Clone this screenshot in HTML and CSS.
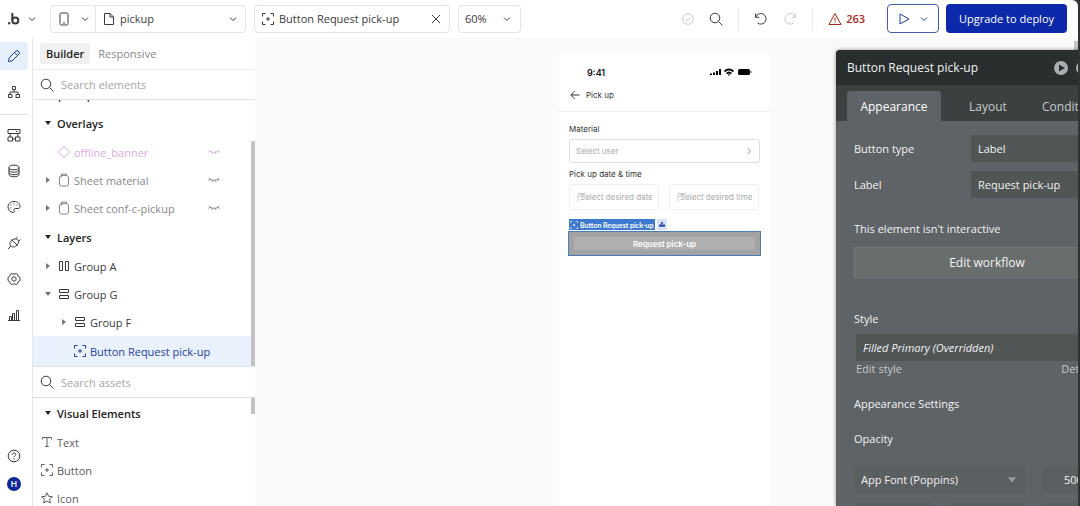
FILE: index.html
```html
<!DOCTYPE html>
<html lang="en">
<head>
    <meta charset="utf-8">
    <meta name="viewport" content="width=device-width, initial-scale=1.0">
    <title>pickup | Editor</title>
    <link rel="stylesheet" href="styles.css">
</head>
<body>
    <svg class="sprite">
        <symbol id="chevron" viewBox="0 0 8 8"><path d="M1 2.5l3 3 3-3"/></symbol>
        <symbol id="search" viewBox="0 0 14 14"><circle cx="6" cy="6" r="4.8"/><path d="M9.5 9.5l3.8 3.8"/></symbol>
        <symbol id="element" viewBox="0 0 12 12"><path d="M.5 3.5v-3h3M8.5.5h3v3M11.5 8.5v3h-3M3.5 11.5h-3v-3M6 4v4M4 6h4"/></symbol>
        <symbol id="rows" viewBox="0 0 12 12"><path d="M1.5 1.5h9v3h-9zM1.5 7.5h9v3h-9z"/></symbol>
        <symbol id="columns" viewBox="0 0 12 12"><path d="M1.5 1.5h3v9h-3zM7.5 1.5h3v9h-3z"/></symbol>
        <symbol id="sheet" viewBox="0 0 12 14"><path d="M4 2.5h4a2.500 2.500 0 0 1 2.500 2.500v6a2 2 0 0 1-2 2h-5a2 2 0 0 1-2-2V5A2.500 2.500 0 0 1 4 2.500zM3.500 4.500V1h5v1.500"/></symbol>
        <symbol id="hidden" viewBox="0 0 12 6"><path d="M.5 1c3 3 8 3 11 0M2 2L.8 3.800M4.500 3.200L4 5M7.500 3.200L8 5M10 2l1.200 1.800"/></symbol>
        <symbol id="right" viewBox="0 0 6 6"><path d="M1 0l4 3-4 3z"/></symbol>
        <symbol id="down" viewBox="0 0 6 6"><path d="M0 1h6L3 5z"/></symbol>
    </svg>

    <div class="app">
        <header class="topbar">
            <button class="logo" aria-label="Home">
                <svg class="icon logo-mark" viewBox="0 0 12 12"><circle cx="1.200" cy="10.200" r="1.200" class="dot"/><path d="M4.300 0v7.500"/><circle cx="7.300" cy="7.500" r="3"/></svg>
                <svg class="icon s8"><use href="#chevron"/></svg>
            </button>
            <div class="box page-box">
                <button class="device" aria-label="Device">
                    <svg class="icon s14" viewBox="0 0 14 14"><rect x="3" y="1" width="8" height="12" rx="1.500"/><path d="M6 11h2"/></svg>
                    <svg class="icon s8"><use href="#chevron"/></svg>
                </button>
                <button class="page">
                    <svg class="icon s12" viewBox="0 0 12 12"><path d="M1.500.5h5.500l3.500 3.500v7.500h-9zM7 .5V4h3.500"/></svg>
                    <span>pickup</span>
                    <svg class="icon s8 end"><use href="#chevron"/></svg>
                </button>
            </div>
            <div class="box element-box">
                <svg class="icon s12"><use href="#element"/></svg>
                <span>Button Request pick-up</span>
                <button class="end" aria-label="Close"><svg class="icon s10" viewBox="0 0 10 10"><path d="M1 1l8 8M9 1L1 9"/></svg></button>
            </div>
            <button class="box zoom">60% <svg class="icon s8"><use href="#chevron"/></svg></button>

            <div class="tools">
                <svg class="icon s12 faded" viewBox="0 0 12 12"><circle cx="6" cy="6" r="5.300"/><path d="M3.500 6.200l1.800 1.800 3.400-3.600"/></svg>
                <button aria-label="Search"><svg class="icon s14"><use href="#search"/></svg></button>
                <span class="sep"></span>
                <button aria-label="Undo"><svg class="icon s14" viewBox="0 0 14 14"><path d="M1.500 1.500v3.800h3.800M1.800 5A5.300 5.300 0 1 1 3.500 11"/></svg></button>
                <button class="faded" aria-label="Redo"><svg class="icon s14" viewBox="0 0 14 14"><path d="M12.500 1.500v3.800H8.700M12.200 5A5.300 5.300 0 1 0 10.500 11"/></svg></button>
                <span class="sep"></span>
                <button class="issues"><svg class="icon s14" viewBox="0 0 14 14"><path d="M7 1.500l6 11H1zM7 5.500v3.500M7 10v1"/></svg> 263</button>
                <button class="preview" aria-label="Preview">
                    <svg class="icon s12" viewBox="0 0 12 12"><path d="M2 1l9 5-9 5z"/></svg>
                    <svg class="icon s8"><use href="#chevron"/></svg>
                </button>
                <button class="deploy">Upgrade to deploy</button>
            </div>
        </header>

        <div class="main">
            <nav class="rail">
                <button class="active" aria-label="Design"><svg class="icon s14" viewBox="0 0 14 14"><path d="M1.500 12.500l.7-3.700L9 2q1-1 2 0l1 1q1 1 0 2l-6.800 6.800zM7.500 3.500l3 3"/></svg></button>
                <button aria-label="Workflow"><svg class="icon s14" viewBox="0 0 14 14"><path d="M5.500 1.500h3v3h-3zM1.500 9.500h3.500v3H1.500zM9 9.500h3.500v3H9zM7 4.500V7M3 9.500V7h8v2.500"/></svg></button>
                <hr>
                <button aria-label="Views"><svg class="icon s14" viewBox="0 0 14 14"><path d="M1 1.500h12v4H1zM1 9h4.500v4H1zM8.500 9H13v4H8.500zM5.500 11h3M3.200 9V5.500M10.800 9V5.500M9 3.500h1.500"/></svg></button>
                <button aria-label="Data"><svg class="icon s14" viewBox="0 0 14 14"><ellipse cx="7" cy="3.500" rx="5" ry="2.300"/><path d="M2 3.500v7c0 3 10 3 10 0v-7M2 6c0 3 10 3 10 0M2 8.500c0 3 10 3 10 0"/></svg></button>
                <button aria-label="Styles"><svg class="icon s14" viewBox="0 0 14 14"><path d="M7 1.500c-3.500 0-6 2.500-6 5.500s2.500 5.500 5 5.500c1.500 0 1.500-1 1-2-.5-1 .2-2 1.500-2H11c1.500 0 2-1 2-2 0-3-2.500-5-6-5z"/><path d="M3.500 7.500v1M4 4.500v1M7 3.500v1M10 4.500v1"/></svg></button>
                <button aria-label="Plugins"><svg class="icon s14" viewBox="0 0 14 14"><path d="M4.500 3.500l6 6M10 9c2-2 2-4 .8-5.200S7.500 2.500 5 4M4.800 4.200C2.500 6.500 2.500 8.500 4 10s3.500 1.500 6-.8M4 10l-3 3M8.500 2.800L10.500.8M11.400 5.500l2-2"/></svg></button>
                <button aria-label="Settings"><svg class="icon s14" viewBox="0 0 14 14"><path d="M4.500 1.500L6 2h2l1.500-.5 1 .7.500 1.800 2 1.500v3L11 10l-.5 1.800-1 .7L8 12H6l-1.500.5-1-.7L3 10 1 8.500v-3L3 4l.5-1.800z"/><circle cx="7" cy="7" r="2.200"/></svg></button>
                <button aria-label="Logs"><svg class="icon s14" viewBox="0 0 14 14"><path d="M1 12.500h12M2.500 12.500v-4h2v4M5.500 12.500v-7h2v7M9.500 12.500v-10h2v10"/></svg></button>
                <button class="help" aria-label="Help"><svg class="icon s14" viewBox="0 0 14 14"><circle cx="7" cy="7" r="5.800"/><path d="M5.200 5.500c.2-2.200 3.700-2 3.600 0C8.700 6.800 7 6.800 7 8.300M7 9.500v1"/></svg></button>
                <button class="account"><span>H</span></button>
            </nav>

            <aside class="panel">
                <div class="panel-tabs">
                    <button class="active">Builder</button>
                    <button>Responsive</button>
                </div>
                <label class="search">
                    <svg class="icon s14"><use href="#search"/></svg>
                    <input type="text" placeholder="Search elements" aria-label="Search elements">
                </label>
                <div class="tree">
                    <div class="row clipped"><svg class="icon s12"><use href="#rows"/></svg> pickup</div>
                    <div class="row heading"><svg class="arrow"><use href="#down"/></svg> Overlays</div>
                    <div class="row muted reusable">
                        <span class="arrow"></span>
                        <svg class="icon s12" viewBox="0 0 12 12"><path d="M6 .5L11.500 6 6 11.500.5 6z"/></svg> offline_banner
                        <svg class="icon eye"><use href="#hidden"/></svg>
                    </div>
                    <div class="row muted">
                        <svg class="arrow"><use href="#right"/></svg>
                        <svg class="icon sheet"><use href="#sheet"/></svg> Sheet material
                        <svg class="icon eye"><use href="#hidden"/></svg>
                    </div>
                    <div class="row muted">
                        <svg class="arrow"><use href="#right"/></svg>
                        <svg class="icon sheet"><use href="#sheet"/></svg> Sheet conf-c-pickup
                        <svg class="icon eye"><use href="#hidden"/></svg>
                    </div>
                    <div class="row heading"><svg class="arrow"><use href="#down"/></svg> Layers</div>
                    <div class="row"><svg class="arrow"><use href="#right"/></svg><svg class="icon s12"><use href="#columns"/></svg> Group A</div>
                    <div class="row"><svg class="arrow"><use href="#down"/></svg><svg class="icon s12"><use href="#rows"/></svg> Group G</div>
                    <div class="row nested"><svg class="arrow"><use href="#right"/></svg><svg class="icon s12"><use href="#rows"/></svg> Group F</div>
                    <div class="row nested selected"><span class="arrow"></span><svg class="icon s12"><use href="#element"/></svg> Button Request pick-up</div>
                    <span class="thumb tree-thumb"></span>
                </div>
                <label class="search assets-search">
                    <svg class="icon s14"><use href="#search"/></svg>
                    <input type="text" placeholder="Search assets" aria-label="Search assets">
                </label>
                <div class="assets">
                    <div class="row heading"><svg class="arrow"><use href="#down"/></svg> Visual Elements</div>
                    <div class="row asset"><svg class="icon s12" viewBox="0 0 12 12"><path d="M1.500 3.500V1.500h9v2M6 1.500v9M4.200 10.500h3.600"/></svg> Text</div>
                    <div class="row asset"><svg class="icon s12"><use href="#element"/></svg> Button</div>
                    <div class="row asset"><svg class="icon s12" viewBox="0 0 12 12"><path d="M6 .8l1.600 3.500 3.800.4-2.900 2.500.9 3.800L6 9.100 2.600 11l.9-3.800L.6 4.700l3.800-.4z"/></svg> Icon</div>
                    <span class="thumb assets-thumb"></span>
                </div>
            </aside>

            <main class="canvas">
                <div class="phone">
                    <div class="status">
                        <span>9:41</span>
                        <svg class="signals" viewBox="0 0 42 8"><path d="M0 7h2V5.500H0zM3 7h2V4.500H3zM6 7h2V3H6zM9 7h2V1H9z"/><path d="M14 3c3-3.200 7-3.200 10 0l-1.200 1.200c-2.200-2.400-5.400-2.400-7.600 0zM16 5c2-2 4-2 6 0l-1.200 1.200c-1-1-2.600-1-3.600 0zM18 6.800L19 8l1-1.200c-.5-.6-1.500-.6-2 0z"/><rect x="28" y="1" width="12" height="6" rx="1.500"/><path d="M40.500 3v2l1-.5v-1z"/></svg>
                    </div>
                    <div class="phone-nav">
                        <svg class="icon s10" viewBox="0 0 10 10"><path d="M9.500 5H1M4.500 1.200L.8 5l3.700 3.800"/></svg> Pick up
                    </div>
                    <form class="phone-form">
                        <label for="material">Material</label>
                        <div class="field">
                            <input id="material" type="text" placeholder="Select user">
                            <svg class="icon s8" viewBox="0 0 8 8"><path d="M2.500 1l3 3-3 3"/></svg>
                        </div>
                        <label for="date">Pick up date &amp; time</label>
                        <div class="pair">
                            <div class="field light">
                                <svg class="icon calendar" viewBox="0 0 10 10"><path d="M1 9.500V1.500h8M1 4h8M3 .5v2M7 .5v2"/></svg>
                                <input id="date" type="text" placeholder="Select desired date">
                            </div>
                            <div class="field light">
                                <svg class="icon calendar" viewBox="0 0 10 10"><path d="M1 9.500V1.500h8M1 4h8M3 .5v2M7 .5v2"/></svg>
                                <input type="text" placeholder="Select desired time" aria-label="Time">
                            </div>
                        </div>
                        <div class="selection">
                            <div class="tag">
                                <span class="tag-name"><svg class="icon s8"><use href="#element"/></svg> Button Request pick-up</span>
                                <span class="tag-parent"><svg viewBox="0 0 8 6"><path d="M2.500 0h3v2H4.500v1H8v3H0V3h3.500V2h-1z"/></svg></span>
                            </div>
                            <button type="button" class="request">Request pick-up</button>
                        </div>
                    </form>
                </div>
                <span class="thumb canvas-thumb"></span>

                <section class="props">
                    <div class="props-title">
                        <h2>Button Request pick-up</h2>
                        <button aria-label="Run"><svg viewBox="0 0 14 14"><circle cx="7" cy="7" r="7"/><path d="M5 3.500l6 3.500-6 3.500z"/></svg></button>
                        <button aria-label="Comment"><svg viewBox="0 0 14 14"><circle cx="7" cy="7" r="7"/></svg></button>
                    </div>
                    <div class="props-tabs">
                        <button class="active">Appearance</button>
                        <button>Layout</button>
                        <button>Conditional</button>
                    </div>
                    <div class="props-body">
                        <div class="prop">
                            <label for="type">Button type</label>
                            <select id="type"><option>Label</option></select>
                        </div>
                        <div class="prop">
                            <label for="label">Label</label>
                            <input id="label" type="text" value="Request pick-up">
                        </div>
                        <p class="notice">This element isn't interactive</p>
                        <button class="workflow">Edit workflow</button>
                        <label class="style-label" for="style">Style</label>
                        <select id="style" class="style-select"><option>Filled Primary (Overridden)</option></select>
                        <div class="style-links"><a href="#">Edit style</a><a href="#">Detach style</a></div>
                        <h3>Appearance Settings</h3>
                        <h3>Opacity</h3>
                        <div class="font-row">
                            <div class="font-family">
                                <select aria-label="Font"><option>App Font (Poppins)</option></select>
                                <svg class="caret"><use href="#down"/></svg>
                            </div>
                            <select class="weight" aria-label="Weight"><option>500</option></select>
                        </div>
                        <div class="format-row"><span></span><span></span><span></span></div>
                    </div>
                </section>
            </main>
        </div>
    </div>
</body>
</html>
```
FILE: styles.css
```css
* {
    box-sizing: border-box;
}

body {
    margin: 0;
    padding-right: 2px;
    background: #303334;
    font-family: "Open Sans", sans-serif;
    font-size: 11px;
    color: #3a3a3a;
}

button, input, select {
    margin: 0;
    padding: 0;
    border: none;
    border-radius: 0;
    background: none;
    font: inherit;
    color: inherit;
    appearance: none;
}

input, select {
    min-width: 0;
    outline: none;
}

button {
    display: flex;
    align-items: center;
    cursor: pointer;
}

/* icons */
.sprite {
    position: absolute;
    width: 0;
    height: 0;
}

.icon {
    flex: none;
    fill: none;
    stroke: currentColor;
    stroke-width: 1;
}

.s8 { width: 8px; height: 8px; }
.s10 { width: 10px; height: 10px; }
.s12 { width: 12px; height: 12px; }
.s14 { width: 14px; height: 14px; }

.end {
    margin-left: auto;
}

.faded {
    color: #c8c8c8;
}

.app {
    display: flex;
    flex-direction: column;
    height: 100vh;
    overflow: hidden;
    background: #fff;
    border-top-right-radius: 6px;
}

/* top bar */
.topbar {
    display: flex;
    align-items: center;
    flex: none;
    height: 37px;
    padding-right: 11px;
}

.logo {
    gap: 8px;
    width: 50px;
    padding-left: 8px;
}

.logo-mark {
    width: 12px;
    height: 12px;
    stroke-width: 2;
}

.dot {
    fill: currentColor;
    stroke: none;
}

.box {
    display: flex;
    align-items: center;
    height: 28px;
    margin-right: 8px;
    border: 1px solid #e4e4e4;
    border-radius: 4px;
}

.page-box, .element-box {
    width: 196px;
}

.device {
    gap: 10px;
    width: 45px;
    height: 26px;
    padding-left: 6px;
    border-right: 1px solid #e4e4e4;
}

.page {
    flex: 1;
    gap: 5px;
    padding: 0 8px 0 7px;
}

.element-box {
    gap: 5px;
    padding: 0 8px 0 7px;
}

.zoom {
    justify-content: space-between;
    width: 63px;
    padding: 0 9px 0 6px;
}

.tools {
    display: flex;
    align-items: center;
    gap: 15px;
    margin-left: auto;
}

.sep {
    width: 1px;
    height: 22px;
    background: #e8e8e8;
}

.issues {
    gap: 4px;
    padding-right: 7px;
    font-weight: 600;
    color: #a8281e;
}

.preview {
    gap: 10px;
    width: 52px;
    height: 29px;
    padding: 0 10px;
    border: 1px solid #3f5fae;
    border-radius: 4px;
    color: #1d3da8;
}

.deploy {
    justify-content: center;
    width: 121px;
    height: 29px;
    margin-left: -8px;
    border-radius: 4px;
    background: #0c29ab;
    color: #fff;
}

.main {
    display: flex;
    flex: 1;
    min-height: 0;
}

/* left rail */
.rail {
    display: flex;
    flex-direction: column;
    flex: none;
    width: 33px;
    padding: 5px 4px 8px 0;
    border-right: 1px solid #e6e6e6;
}

.rail button {
    justify-content: center;
    height: 28px;
    margin-bottom: 8px;
    border-radius: 0 4px 4px 0;
}

.rail .active {
    background: #e6effc;
    color: #1d3da8;
}

.rail hr {
    width: 100%;
    margin: 0 0 6px;
    border: none;
    border-top: 1px solid #e0e0e0;
}

.rail .help {
    margin: auto 0 0;
}

.rail .account {
    margin: 0;
}

.account span {
    width: 14px;
    border-radius: 50%;
    background: #10279c;
    font-size: 9px;
    font-weight: 600;
    line-height: 14px;
    color: #fff;
}

/* element tree */
.panel {
    display: flex;
    flex-direction: column;
    flex: none;
    width: 222px;
}

.panel-tabs {
    display: flex;
    align-items: center;
    flex: none;
    gap: 2px;
    height: 33px;
    padding-left: 7px;
    border-bottom: 1px solid #ececec;
    font-weight: 600;
}

.panel-tabs button {
    height: 21px;
    padding: 0 6px;
    border-radius: 3px;
    font-weight: 500;
    color: #888;
}

.panel-tabs .active {
    background: #f0f0f0;
    font-weight: 600;
    color: #222;
}

.search {
    display: flex;
    align-items: center;
    flex: none;
    gap: 7px;
    height: 30px;
    padding-left: 7px;
    border-bottom: 1px solid #dedede;
}

.search input {
    flex: 1;
}

.search input::placeholder {
    color: #a5a5a5;
}

.assets-search {
    height: 32px;
    border-top: 1px solid #e4e4e4;
}

.tree, .assets {
    position: relative;
    flex: none;
    overflow: hidden;
}

.assets {
    flex: 1;
}

.row {
    display: flex;
    align-items: center;
    gap: 4px;
    height: 28px;
    padding-left: 12px;
}

.row .arrow {
    width: 6px;
    height: 6px;
    margin-right: 3px;
    fill: #777;
}

.heading {
    height: 30px;
    font-weight: 600;
    color: #222;
}

.heading .arrow {
    margin-right: 2px;
    fill: #222;
}

.clipped {
    margin-top: -20px;
    padding-left: 9px;
    font-weight: 600;
}

.muted {
    color: #888;
}

.reusable {
    color: #d9addf;
}

.sheet {
    width: 12px;
    height: 14px;
}

.eye {
    width: 12px;
    height: 6px;
    margin: 0 35px 0 auto;
}

.nested {
    padding-left: 28px;
}

.selected {
    height: 30px;
    background: #e9f1fc;
    color: #1f3f9c;
}

.asset {
    padding-left: 8px;
    color: #5c5c5c;
}

.thumb {
    position: absolute;
    right: 0;
    width: 4px;
    background: #c4c4c4;
}

.tree-thumb {
    top: 41px;
    bottom: 0;
}

.assets-thumb {
    top: 0;
    height: 16px;
}

/* canvas */
.canvas {
    position: relative;
    flex: 1;
    min-width: 0;
    padding: 18px 4px 0 0;
    overflow: hidden;
    background: #fafafa;
}

.canvas-thumb {
    top: 4px;
    height: 20px;
}

.phone {
    width: 211px;
    height: 100%;
    margin: 0 auto;
    background: #fff;
    font-family: Inter, sans-serif;
    font-size: 8px;
    color: #333;
}

.status {
    display: flex;
    align-items: center;
    justify-content: space-between;
    height: 34px;
    padding: 0 18px 0 28px;
    font-size: 9px;
    font-weight: 600;
    color: #111;
}

.signals {
    width: 42px;
    height: 8px;
}

.phone-nav {
    display: flex;
    align-items: center;
    gap: 6px;
    padding: 0 0 10px 11px;
    border-bottom: 1px solid #eee;
    line-height: 12px;
}

.phone-form {
    padding: 11px 10px 0;
}

.phone-form label {
    display: block;
    line-height: 12px;
}

.field {
    display: flex;
    align-items: center;
    height: 24px;
    margin: 4px 0 5px;
    padding: 0 6px;
    border: 1px solid #ddd;
    border-radius: 3px;
    color: #999;
}

.field input {
    flex: 1;
}

.field input::placeholder {
    color: #aaa;
}

.pair {
    display: flex;
    gap: 10px;
    padding-right: 1px;
}

.light {
    position: relative;
    flex: 1;
    height: 26px;
    border-color: #eee;
}

.light input {
    width: 100%;
    padding-left: 4px;
}

.calendar {
    position: absolute;
    left: 7px;
    width: 10px;
    height: 10px;
    color: #ccc;
}

.selection {
    position: relative;
    margin-top: 17px;
    outline: 1px solid #4a7fb5;
}

.tag {
    position: absolute;
    bottom: 100%;
    left: 0;
    display: flex;
    gap: 2px;
    height: 11px;
    margin-bottom: 2px;
    font-family: Lato, sans-serif;
    font-size: 7px;
    font-weight: 700;
    white-space: nowrap;
}

.tag-name {
    display: flex;
    align-items: center;
    gap: 2px;
    padding: 0 2px 0 1px;
    background: #3c79d0;
    color: #fff;
}

.tag-parent {
    display: flex;
    align-items: center;
    justify-content: center;
    width: 10px;
    background: #d5e2f8;
    fill: #2a4c9c;
}

.tag-parent svg {
    width: 6px;
    height: 5px;
}

.request {
    justify-content: center;
    width: 100%;
    height: 23px;
    border: 5px solid #a2a2a2;
    background: #afafaf;
    font-weight: 600;
    color: #fff;
}

/* property editor, floats over the canvas and runs off its right edge */
.props {
    position: absolute;
    top: 13px;
    right: -60px;
    bottom: 0;
    width: 302px;
    overflow: hidden;
    border-top-left-radius: 4px;
    background: #5e6367;
    box-shadow: 0 0 4px rgba(0, 0, 0, 0.4);
    color: #f2f2f2;
}

.props-title {
    display: flex;
    align-items: center;
    gap: 8px;
    height: 35px;
    padding: 0 48px 0 11px;
    background: #292e2f;
}

.props-title h2 {
    flex: 1;
    margin: 0;
    font-size: 12px;
    font-weight: 400;
}

.props-title svg {
    width: 14px;
    height: 14px;
    fill: #a9adaf;
}

.props-title path {
    fill: #292e2f;
}

.props-tabs {
    display: flex;
    height: 36px;
    padding: 6px 0 0 11px;
    background: #3b4041;
}

.props-tabs button {
    flex: 0 0 94px;
    justify-content: center;
    border-radius: 4px 4px 0 0;
    font-size: 12px;
    color: #c8cacb;
}

.props-tabs button:last-child {
    flex: none;
    padding: 0 7px;
}

.props-tabs .active {
    background: #5e6367;
    color: #fff;
}

.props-body {
    padding: 14px 18px 0;
}

.prop {
    display: flex;
    align-items: center;
    height: 27px;
    margin-bottom: 9px;
}

.prop label {
    width: 117px;
}

.prop select, .prop input {
    flex: 1;
    height: 27px;
    padding-left: 7px;
    background: #505556;
}

.notice {
    margin: 24px 0 11px;
    line-height: 14px;
}

.workflow {
    justify-content: center;
    width: 100%;
    height: 31px;
    border: 1px solid #727778;
    background: #686d6e;
    font-size: 12px;
}

.style-label {
    display: block;
    margin: 34px 0 8px;
    line-height: 14px;
}

.style-select {
    display: block;
    width: 264px;
    height: 27px;
    margin-left: 2px;
    padding-left: 7px;
    background: #505556;
    font-style: italic;
}

.style-links {
    display: flex;
    justify-content: space-between;
    margin: 1px -4px 0 2px;
    line-height: 14px;
}

.style-links a {
    color: #c4c7c9;
    text-decoration: none;
}

.props-body h3 {
    margin: 21px 0 0;
    font-size: 11px;
    font-weight: 400;
    line-height: 14px;
}

.font-row {
    display: flex;
    gap: 17px;
    margin-top: 20px;
}

.font-family {
    display: flex;
    align-items: center;
    width: 171px;
    height: 27px;
    padding: 0 9px 0 7px;
    background: #5a5f61;
}

.font-family select {
    flex: 1;
}

.caret {
    width: 8px;
    height: 8px;
    fill: #94989a;
}

.weight {
    flex: 1;
    padding-left: 22px;
    background: #5a5f61;
}

.format-row {
    display: flex;
    gap: 17px;
    margin-top: 9px;
}

.format-row span {
    flex: 1;
    height: 27px;
    background: #5a5f61;
}
```
